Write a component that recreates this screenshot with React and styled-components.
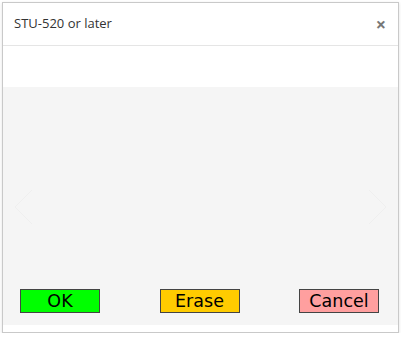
import React from 'react'
import styled, { createGlobalStyle } from 'styled-components'

const GlobalStyle = createGlobalStyle`
  html, body {
    margin: 0;
    padding: 0;
    background: #fff;
  }
`

const Dialog = styled.div`
  box-sizing: border-box;
  margin: 2px 0 0 2px;
  width: 397px;
  height: 331px;
  border: 1px solid #c9c9c9;
  box-shadow: 0 1px 3px rgba(0, 0, 0, 0.12);
  background: #fff;
  display: flex;
  flex-direction: column;
`

const Header = styled.div`
  height: 42px;
  border-bottom: 1px solid #e5e5e5;
  display: flex;
  align-items: center;
  justify-content: space-between;
  padding: 0 12px 0 11px;
  font-family: 'Open Sans', sans-serif;
`

const Title = styled.div`
  font-size: 13px;
  color: #333;
  margin-top: -2px;
`

const Close = styled.div`
  font-size: 18px;
  font-weight: 700;
  color: #777;
  line-height: 1;
  margin-top: -1px;
`

const Spacer = styled.div`
  height: 41px;
`

const Canvas = styled.div`
  position: relative;
  height: 238px;
  background: #f5f5f5;
  display: flex;
  flex-direction: column;
  justify-content: flex-end;
  padding: 0 19px 12px 17px;
  box-sizing: border-box;
`

const Chevron = styled.svg`
  position: absolute;
  top: 102px;
  ${props => (props.side === 'left' ? 'left: 9px;' : 'right: 9px;')}
`

const ButtonRow = styled.div`
  display: flex;
  justify-content: space-between;
`

const Button = styled.div`
  box-sizing: border-box;
  width: 80px;
  height: 24px;
  border: 1px solid #444;
  background: ${props => props.bg};
  font-family: 'DejaVu Sans', sans-serif;
  font-size: 17.5px;
  color: #000;
  display: flex;
  align-items: center;
  justify-content: center;
`

export default function App() {
  return (
    <>
      <GlobalStyle />
      <Dialog>
        <Header>
          <Title>STU-520 or later</Title>
          <Close>×</Close>
        </Header>
        <Spacer />
        <Canvas>
          <Chevron side="left" width="22" height="36" viewBox="0 0 22 36">
            <path d="M20 1 L3 18 L20 35" fill="none" stroke="#efefef" strokeWidth="1" />
          </Chevron>
          <Chevron side="right" width="22" height="36" viewBox="0 0 22 36">
            <path d="M2 1 L19 18 L2 35" fill="none" stroke="#efefef" strokeWidth="1" />
          </Chevron>
          <ButtonRow>
            <Button bg="#00ff00">OK</Button>
            <Button bg="#ffcc00">Erase</Button>
            <Button bg="#ff9f9f">Cancel</Button>
          </ButtonRow>
        </Canvas>
      </Dialog>
    </>
  )
}
